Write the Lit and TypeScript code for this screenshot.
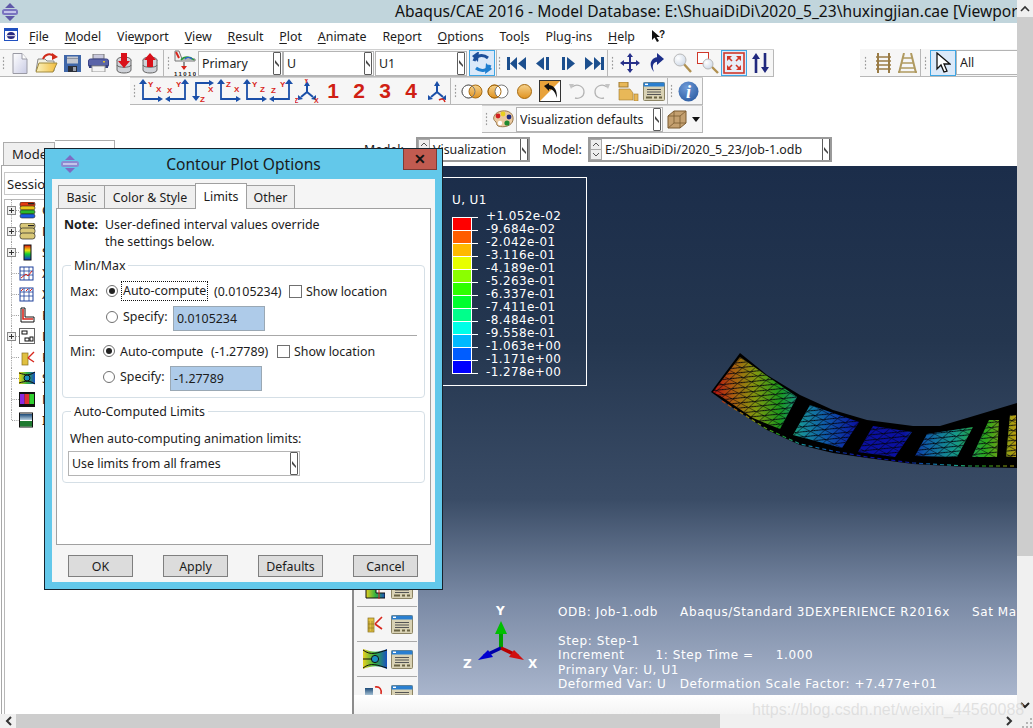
import { LitElement, html, css, svg } from "lit";
import { customElement } from "lit/decorators.js";

const ic = (w: number, h: number, body: unknown) =>
  html`<svg width=${w} height=${h} viewBox="0 0 ${w} ${h}">${body}</svg>`;

const BL = "#1a4fa8";
const RD = "#d8261c";
const axis = (kind: number, a: string, b: string) => {
  const s = (d: string) => svg`<path d=${d} fill="none" stroke=${BL} stroke-width="1.8"/>`;
  const h = (d: string) => svg`<path d=${d} fill=${BL}/>`;
  const t = (x: number, y: number, c: string) =>
    svg`<text x=${x} y=${y} font-family="Liberation Sans" font-weight="700" font-size="8" fill=${RD}>${c}</text>`;
  if (kind === 0)
    return ic(24, 24, svg`${s("M4 3V20H22")}${h("M0 5L4 0L8 5Z")}${h("M19 17L24 20L19 23Z")}${t(9, 8, a)}${t(17, 13, b)}`);
  if (kind === 1)
    return ic(24, 24, svg`${s("M20 3V20H3")}${h("M16 5L20 0L24 5Z")}${h("M5 17L0 20L5 23Z")}${t(11, 8, a)}${t(2, 14, b)}`);
  return ic(24, 24, svg`${s("M5 20V4H21")}${h("M1 17L5 22L9 17Z")}${h("M18 1L23 4L18 7Z")}${t(17, 13, a)}${t(9, 23, b)}`);
};
const triad = (lab: boolean) =>
  ic(24, 24, svg`<path d="M12 6V13M12 13L6 18M12 13L18 18" stroke=${BL} stroke-width="2" fill="none"/><path d="M9 7L12 2L15 7ZM3 16L8 20L3 21ZM21 16L16 20L21 21Z" fill=${BL}/>
  ${lab
      ? svg`<text x="9" y="4" font-size="7" font-weight="700" font-family="Liberation Sans" fill=${RD}>Y</text><text x="-1" y="24" font-size="7" font-weight="700" font-family="Liberation Sans" fill=${RD}>Z</text><text x="19" y="24" font-size="7" font-weight="700" font-family="Liberation Sans" fill=${RD}>X</text>`
      : svg`<path d="M14 21C17 19 19 20 20 23" stroke=${RD} stroke-width="1.6" fill="none"/>`}`);

const cyl = (up: boolean) =>
  ic(18, 22, svg`<ellipse cx="9" cy="8" rx="7" ry="3" fill="#d9dbe0" stroke="#666"/><path d="M2 8V18C2 22 16 22 16 18V8" fill="#cfd2d8" stroke="#666"/><path d="M2 13C2 16 16 16 16 13" fill="none" stroke="#666"/>
  <path d=${up ? "M9 1L15 8H12V15H6V8H3Z" : "M6 1H12V9H15L9 16L3 9H6Z"} fill="#d9101a"/>`);

const tableIcon = ic(22, 19, svg`<rect x=".5" y=".5" width="21" height="18" rx="1" fill="#d9d2b4" stroke="#8c8464"/><rect x=".5" y=".5" width="21" height="4" fill="#2a7fd0"/><rect x="2" y="1.6" width="3" height="1.4" fill="#fff"/><path d="M4 7.5H18M4 10H18M4 12.5H18" stroke="#555" stroke-width="1"/><path d="M3 15.5H9M11 15.5H14M16 15.5H19" stroke="#6b6444" stroke-width="2"/>`);

const ICONS: Record<string, unknown> = {
  doc: ic(16, 21, svg`<path d="M1 .5H10L15 6V20.5H1Z" fill="url(#gDoc)" stroke="#9a9aa4"/><path d="M10 .5V6H15" fill="#fff" stroke="#9a9aa4"/>`),
  open: ic(23, 20, svg`<path d="M3 6H10L12 8H19V18H1Z" fill="#f2f0e0" stroke="#888"/><path d="M4 10H22L18 19H1Z" fill="url(#gFolder)" stroke="#a08a40"/><path d="M8 6C10 1 15 0 19 3" fill="none" stroke="#d02a1a" stroke-width="2"/><path d="M17 0L23 4L17 7Z" fill="#d02a1a"/>`),
  save: ic(17, 17, svg`<rect width="17" height="17" fill="#3f66a8"/><rect x="3" y="1.5" width="11" height="7" fill="#c3c7cf"/><rect x="3" y="3" width="11" height="1" fill="#8d93a0"/><rect x="4" y="11" width="9" height="6" fill="#2b2f38"/><rect x="9" y="12" width="3" height="4" fill="#9aa0ac"/>`),
  print: ic(21, 18, svg`<rect x="5" y="0" width="11" height="5" fill="#c8c8dc" stroke="#777"/><rect x="0.5" y="5" width="20" height="8" rx="2" fill="#5a64a8" stroke="#3a4288"/><rect x="1" y="11" width="19" height="3" fill="#34407e"/><rect x="4" y="12" width="13" height="6" fill="#f4f4f4" stroke="#999"/><rect x="15" y="7" width="2" height="1.5" fill="#e0c030"/>`),
  down: cyl(false),
  up: cyl(true),
  part: ic(22, 26, svg`<path d="M1 1V11H21V9H8L5 1Z" fill="#eee" stroke="#777"/><path d="M2 2L5 8" stroke=${RD} stroke-width="2"/><path d="M7 10C10 6 16 6 20 10" stroke="#2a9a3a" stroke-width="1.5" fill="none"/><path d="M11 9C13 7 16 7 18 9" stroke="#2a60d0" stroke-width="1.5" fill="none"/><path d="M10 12V19" stroke="#333"/><path d="M7 16L10 20L13 16Z" fill=${RD}/><text x="0" y="26" font-size="6" font-family="Liberation Sans" font-weight="700" fill="#222" textLength="22">11010</text>`),
  sync: ic(22, 22, svg`<path d="M3 9C5 3 12 2 17 6" fill="none" stroke="#1d4f9a" stroke-width="3"/><path d="M8 0L1 5L7 11Z" fill="#1d4f9a" transform="translate(0 -1)"/><path d="M19 13C17 19 10 20 5 16" fill="none" stroke="#1f7fd0" stroke-width="3"/><path d="M14 22L21 17L15 11Z" fill="#1f7fd0"/>`),
  first: ic(19, 13, svg`<path d="M0 0H3V13H0ZM10 0V13L3 6.5ZM19 0V13L11 6.5Z" fill="#1c4f8e"/>`),
  prev: ic(13, 13, svg`<path d="M8 0V13L0 6.5ZM10 0H13V13H10Z" fill="#1c4f8e"/>`),
  next: ic(13, 13, svg`<path d="M5 0V13L13 6.5ZM0 0H3V13H0Z" fill="#1c4f8e"/>`),
  last: ic(19, 13, svg`<path d="M19 0H16V13H19ZM9 0V13L16 6.5ZM0 0V13L8 6.5Z" fill="#1c4f8e"/>`),
  pan: ic(20, 20, svg`<path d="M10 2V18M2 10H18" stroke="#27308a" stroke-width="2"/><path d="M10 0L13 4H7ZM10 20L13 16H7ZM0 10L4 7V13ZM20 10L16 7V13Z" fill="#27308a"/>`),
  rotate: ic(16, 20, svg`<path d="M12 4C4 3 -1 11 6 19C3 12 6 8 12 9Z" fill="#1d2f8a"/><path d="M9 0L16 6L9 12Z" fill="#1d2f8a"/>`),
  zoom: ic(19, 20, svg`<path d="M10 10L18 19" stroke="#b09050" stroke-width="2.4"/><circle cx="7" cy="7" r="6" fill="url(#gLens)" stroke="#b8b8b8"/>`),
  boxzoom: ic(22, 22, svg`<rect x=".5" y=".5" width="11" height="11" fill="#fff" stroke="#d0382a"/><path d="M14 14L21 21" stroke="#b09050" stroke-width="2.4"/><circle cx="11" cy="12" r="5" fill="url(#gLens)" stroke="#b8b8b8"/>`),
  fit: ic(22, 22, svg`<rect x="1" y="1" width="20" height="20" fill="#e8eef8" stroke="#d0382a" stroke-width="1.6"/><path d="M4 4L9 4L4 9ZM18 4L13 4L18 9ZM4 18L9 18L4 13ZM18 18L13 18L18 13Z" fill="#d0382a"/><path d="M5 5L9 9M17 5L13 9M5 17L9 13M17 17L13 13" stroke="#d0382a" stroke-width="1.6"/>`),
  flip: ic(17, 20, svg`<path d="M4 4V20M13 0V16" stroke="#20287e" stroke-width="2.6"/><path d="M4 0L8 6H0ZM13 20L17 14H9Z" fill="#20287e"/>`),
  rail: ic(15, 20, svg`<path d="M2 0V20M13 0V20" stroke="#9a7c46" stroke-width="2"/><path d="M0 4H15M0 8H15M0 12H15M0 16H15" stroke="#9a7c46" stroke-width="1.6"/>`),
  rail2: ic(19, 20, svg`<path d="M6 0L1 20M13 0L18 20" stroke="#b09a60" stroke-width="2"/><path d="M4 5H15M3 10H16M2 15H17M0 19H19" stroke="#b09a60" stroke-width="1.6"/>`),
  cursor: ic(15, 21, svg`<path d="M1 1V17L5 13L8 20L11 19L8 12H14Z" fill="#fff" stroke="#111" stroke-width="1.3"/>`),
  venn1: ic(22, 15, svg`<circle cx="7.5" cy="7.5" r="6.5" fill="#fff" stroke="#777"/><circle cx="14.5" cy="7.5" r="6.5" fill="url(#gOr)" stroke="#a66a10"/><circle cx="7.5" cy="7.5" r="6.5" fill="none" stroke="#777"/>`),
  venn2: ic(22, 15, svg`<circle cx="7.5" cy="7.5" r="6.5" fill="url(#gOr)" stroke="#a66a10"/><circle cx="14.5" cy="7.5" r="6.5" fill="#fff" stroke="#777"/><circle cx="7.5" cy="7.5" r="6.5" fill="none" stroke="#a66a10"/>`),
  ball: ic(15, 15, svg`<circle cx="7.5" cy="7.5" r="7" fill="url(#gOr)" stroke="#a66a10"/>`),
  tool: ic(22, 22, svg`<rect x=".5" y=".5" width="21" height="21" fill="#fff" stroke="#333"/><path d="M1 1H21L1 21Z" fill="#e8a23a"/><path d="M5 6L10 3V5C16 6 18 10 18 18C16 12 14 9 10 9V11Z" fill="#111"/>`),
  undo: ic(17, 17, svg`<path d="M4 4C9 0 16 3 16 9C16 14 11 16 7 15" fill="none" stroke="#b4b4b4" stroke-width="1.3"/><path d="M1 1L6 1L3 6Z" fill="#c4c4c4"/>`),
  redo: ic(17, 17, svg`<path d="M13 4C8 0 1 3 1 9C1 14 6 16 10 15" fill="none" stroke="#b4b4b4" stroke-width="1.3"/><path d="M16 1L11 1L14 6Z" fill="#c4c4c4"/>`),
  layers: ic(21, 19, svg`<rect x="1" y="0" width="9" height="5" fill="#e8b858" stroke="#a07a30"/><path d="M1 7H12L15 11V18H1Z" fill="#e8b858" stroke="#a07a30" stroke-width=".6"/><rect x="16" y="12" width="4" height="7" fill="#e8b858" stroke="#a07a30" stroke-width=".6"/>`),
  table: tableIcon,
  info: ic(21, 21, svg`<circle cx="10.5" cy="10.5" r="10" fill="url(#gInfo)"/><text x="10.5" y="17" text-anchor="middle" font-family="Liberation Serif" font-style="italic" font-weight="700" font-size="18" fill="#fff">i</text>`),
  palette: ic(22, 18, svg`<path d="M10 1C17 0 22 4 21 10C20 16 12 18 6 16C4 15 5 12 3 11C0 9 2 2 10 1Z" fill="#eac9a0" stroke="#9a7a50"/><circle cx="6" cy="6" r="2.4" fill="#d02020"/><circle cx="11" cy="4" r="2.4" fill="#e8d020"/><circle cx="17" cy="7" r="2.4" fill="#1a2a80"/><circle cx="15" cy="13" r="2.6" fill="#208a30"/><circle cx="8" cy="13" r="2.2" fill="#fff"/>`),
  cube: ic(20, 19, svg`<path d="M1 6L7 1H19V13L13 18H1Z" fill="#c4a070" stroke="#7a5a30"/><path d="M1 6H13V18M13 6L19 1M7 1V13H19M7 13L1 18" fill="none" stroke="#7a5a30" stroke-width=".8"/>`),
  drop: ic(8, 5, svg`<path d="M0 0H8L4 5Z" fill="#111"/>`),
};

const TREE: Record<string, unknown> = {
  stack: ic(17, 17, svg`<rect x="1" y="0" width="15" height="5" rx="2" fill="#e23a10" stroke="#222" stroke-width=".6"/><rect x="9" y="1" width="6" height="1.4" fill="#222"/><rect x="1" y="4" width="15" height="4" rx="2" fill="#eac81a" stroke="#222" stroke-width=".6"/><rect x="1" y="8" width="15" height="4" rx="2" fill="#2ab82a" stroke="#222" stroke-width=".6"/><rect x="1" y="12" width="15" height="4" rx="2" fill="#1a5ae0" stroke="#222" stroke-width=".6"/>`),
  tan: ic(17, 17, svg`<rect x="1" y="0" width="15" height="6" rx="2.5" fill="#d9c878" stroke="#222" stroke-width=".7"/><rect x="9" y="2" width="6" height="1.2" fill="#222"/><rect x="1" y="5" width="15" height="6" rx="2.5" fill="#d9c878" stroke="#222" stroke-width=".7"/><rect x="1" y="10" width="15" height="6" rx="2.5" fill="#d9c878" stroke="#222" stroke-width=".7"/>`),
  spec: ic(17, 17, svg`<rect x="5" y="1" width="7" height="15" fill="url(#gSpec)" stroke="#111"/>`),
  xy1: ic(17, 17, svg`<rect x="1" y="2" width="13" height="13" fill="#fff" stroke="#1c3f9a"/><path d="M5 2V15M10 2V15M1 6H14M1 10H14" stroke="#1c3f9a" stroke-width=".8"/><path d="M2 13L7 9L9 11L13 6" stroke=${RD} fill="none"/>`),
  xy2: ic(17, 17, svg`<rect x="1" y="2" width="13" height="13" fill="#fff" stroke="#1c3f9a"/><path d="M5 2V15M10 2V15M1 6H14M1 10H14" stroke="#1c3f9a" stroke-width=".8"/><path d="M2 5L4 3M7 5L9 3M11 5L13 3" stroke=${RD}/>`),
  path: ic(17, 17, svg`<path d="M2 1H6V10H15V15H2Z" fill="#fff" stroke="#111"/><path d="M4 2V12H14" fill="none" stroke=${RD} stroke-width="1.6"/>`),
  disp: ic(17, 17, svg`<rect x=".5" y=".5" width="15" height="15" fill="#fff" stroke="#666"/><rect x="3" y="3" width="5" height="3" fill="none" stroke="#111"/><rect x="6" y="10" width="4" height="3" fill="none" stroke="#111"/><rect x="11" y="9" width="3" height="4" fill="none" stroke="#111"/>`),
  cut: ic(17, 17, svg`<rect x="3" y="4" width="6" height="12" fill="#e0c040" stroke="#887020" stroke-width=".7"/><path d="M9 9L15 3M9 9L15 13" stroke=${RD} stroke-width="1.4"/>`),
  flow: ic(17, 17, svg`<rect x="0" y="2" width="16" height="12" fill="url(#gFlow)"/><path d="M0 3C7 5 10 6 16 2M0 13C7 11 10 10 16 14" stroke="#111" fill="none"/><circle cx="8" cy="8" r="3" fill="#1a90c0" stroke="#111"/>`),
  film: ic(17, 17, svg`<rect x="0" y="1" width="16" height="15" fill="#111"/><rect x="1" y="3" width="4.6" height="10" fill="#8a2ae0"/><rect x="5.6" y="3" width="4.8" height="10" fill="#e03030"/><rect x="10.4" y="3" width="4.6" height="10" fill="#30d030"/>`),
  img: ic(17, 17, svg`<rect x=".5" y="1" width="13" height="14" fill="#fff" stroke="#111"/><rect x="1" y="2" width="12" height="6" fill="url(#gImg)"/><rect x="1" y="9" width="12" height="5.5" fill="#1f7a30"/>`),
};

const treeRows: [string, boolean, string][] = [
  ["stack", true, "Output Databases"],
  ["tan", true, "Model Databases"],
  ["spec", true, "Spectrums"],
  ["xy1", false, "XY Plots"],
  ["xy2", false, "XY Data"],
  ["path", false, "Paths"],
  ["disp", true, "Display Groups"],
  ["cut", false, "Free Body Cuts"],
  ["flow", false, "Streams"],
  ["film", false, "Movies"],
  ["img", false, "Images"],
];

const legendLabels = ["+1.052e-02","-9.684e-02","-2.042e-01","-3.116e-01","-4.189e-01","-5.263e-01","-6.337e-01","-7.411e-01","-8.484e-01","-9.558e-01","-1.063e+00","-1.171e+00","-1.278e+00"];
const legendColors = ["#ff0000","#ff5d00","#ffb900","#e8ff00","#8bff00","#2eff00","#00ff2e","#00ff8b","#00ffe8","#00b9ff","#005dff","#0000ff"];

const menu: [string, string, string][] = [
  ["", "F", "ile"], ["", "M", "odel"], ["Vie", "w", "port"], ["", "V", "iew"], ["", "R", "esult"], ["", "P", "lot"],
  ["", "A", "nimate"], ["Re", "p", "ort"], ["", "O", "ptions"], ["Too", "l", "s"], ["Plu", "g", "-ins"], ["", "H", "elp"],
];

const meshPanels = [
  "713,392 740,357 797,397 780,429 753,418 722,397",
  "810,405 859,422 842,448 793,435",
  "873,426 912,432 895,457 858,452",
  "927,434 973,427 957,457 915,456",
  "989,420 999,420 997,457 972,457",
  "1010,415 1016,415 1016,457 1006,457",
];

@customElement("app-root")
export class AppRoot extends LitElement {
  static styles = css`
    :host { display: block; width: 1033px; height: 728px; overflow: hidden; position: relative; background: #fff;
      font-family: "Noto Sans", sans-serif; font-size: 12.4px; color: #1c1c1c; }
    .defs { position: absolute; width: 0; height: 0; }
    svg { display: block; flex: none; }
    .frame { display: grid; grid-template-columns: 1017px 16px; grid-template-rows: 714px 14px; height: 728px; }
    .work { display: flex; flex-direction: column; height: 714px; overflow: hidden; }

    .title { height: 23px; flex: none; background: #c1d5dc; position: relative; font-size: 15.6px; line-height: 23px; white-space: nowrap; overflow: hidden; padding-left: 395px; color: #111; }
    .title svg { position: absolute; left: 2px; top: 3px; }
    .menubar { height: 26px; flex: none; display: flex; align-items: center; gap: 15.8px; padding-left: 29px; position: relative; background: #fff; white-space: nowrap; }
    .menubar .logo { position: absolute; left: 4px; top: 5px; }
    .menubar u { text-underline-offset: 2px; }

    .tbrow { display: flex; flex: none; height: 28px; }
    .r2 { padding-left: 130px; }
    .r3 { padding-left: 482px; }
    .strip { display: flex; align-items: center; background: #f6f6f6; border-bottom: 1px solid #b8b8b8; box-sizing: border-box; height: 28px; border-top: 1px solid #d0d0d0; }
    .grp { display: flex; align-items: center; height: 100%; border-right: 1px solid #b8b8b8; box-sizing: content-box; }
    .grip { flex: none; width: 3px; height: 14px; margin: 0 2px 0 2px; background-image: radial-gradient(circle, #9a9a9a 1px, transparent 1.1px); background-size: 3px 3.5px; }
    .grip.g6 { margin: 0 2px 0 1px; }
    .grip.g8 { margin: 0 2px 0 3px; }
    .grip.g9 { margin: 0 3px 0 3px; }
    .grip.g11 { margin: 0 4px 0 4px; }
    .pad1 { width: 1px; flex: none; }
    .btn { width: 26px; height: 26px; flex: none; display: flex; align-items: center; justify-content: center; box-sizing: border-box; }
    .btn.n { font-family: "Liberation Sans", sans-serif; font-weight: 700; font-size: 21px; color: #d01f14; }
    .btn.on { background: #dbe9f9; border: 1px solid #3fa6e4; }
    .btn.sq { width: 24px; }
    .btn.dr { width: 13px; }
    .right { display: flex; height: 28px; margin-left: 86px; flex: 1; min-width: 0; }
    .right .strip { flex: 1; border-top: 0; min-width: 0; overflow: hidden; }
    .grp.fill { flex: 1; border-right: 0; min-width: 0; overflow: hidden; }

    .combo { display: flex; align-items: center; box-sizing: border-box; height: 25px; background: #fff; border: 1px solid #b4b4b4; padding: 0 1px 0 3px; flex: none; white-space: nowrap; overflow: hidden; }
    .combo .txt { flex: 1; overflow: hidden; }
    .spin { flex: none; width: 6px; height: 21px; border: 1px solid #5c5c5c; border-radius: 1px; background: #fff; box-sizing: content-box; display: flex; align-items: center; justify-content: center; }
    .w85 { width: 85px; } .w91 { width: 91px; } .w92 { width: 92px; margin: 0 2px 0 1px; }
    .w147 { width: 147px; margin: 0 2px 0 0; }
    .wAll { width: 90px; border-right: 0; }

    .lower { flex: 1; display: flex; min-height: 0; }
    .lp { width: 352px; flex: none; display: flex; flex-direction: column; }
    .tabs0 { height: 32px; flex: none; display: flex; align-items: flex-end; padding-left: 3px; box-sizing: border-box; }
    .t0 { width: 52px; height: 23px; box-sizing: border-box; background: #efefef; border: 1px solid #acacac; border-bottom: 0; padding: 2px 0 0 8px; overflow: hidden; font-size: 13px; }
    .t1 { width: 60px; height: 25px; box-sizing: border-box; background: #fff; border: 1px solid #acacac; border-bottom: 0; border-left: 0; }
    .panel { flex: 1; margin-left: 1px; border-left: 1px solid #a8a8a8; border-top: 1px solid #a8a8a8; display: flex; flex-direction: column; padding: 6px 0 0 2px; min-height: 0; }
    .sess { width: 300px; height: 23px; border-color: #c8c8c8; padding-left: 2px; flex: none; font-size: 13px; }
    .tree { margin-top: 4px; flex: 1; border: 1px solid #b8b8b8; border-right: 0; border-bottom: 0; min-height: 0; }
    .trow { display: flex; align-items: center; height: 21px; white-space: nowrap; }
    .trow .ti { margin: 0 6px 0 0; }

    .rc { flex: 1; display: flex; flex-direction: column; min-width: 0; }
    .modelrow { height: 33px; flex: none; display: flex; align-items: center; box-sizing: border-box; padding: 0 0 0 12px; white-space: nowrap; background: #fff; }
    .ml1 { width: 52px; flex: none; }
    .ml2 { width: 46px; margin-left: 12px; flex: none; }
    .mcombo { display: flex; align-items: center; box-sizing: border-box; height: 25px; border: 2px solid #9a9a9a; background: #fff; flex: none; overflow: hidden; }
    .mcombo .txt { flex: 1; padding-left: 3px; overflow: hidden; white-space: nowrap; }
    .mw1 { width: 114px; } .mw2 { width: 244px; }
    .vp { flex: 1; display: flex; flex-direction: column; min-height: 0; border-left: 2px solid #8c8c8c; }
    .vpmain { flex: 1; display: flex; min-height: 0; }
    .status { height: 19px; flex: none; background: linear-gradient(#fff, #f4f4f4); }
    .vstrip { width: 64px; flex: none; background: #f5f5f5; padding-top: 406px; box-sizing: border-box; overflow: hidden; }
    .vrow { height: 35px; box-sizing: border-box; border-bottom: 1px solid #aaa; display: flex; align-items: center; padding-left: 8px; gap: 6px; margin: 0 1px 0 3px; flex: none; }
    .vic { width: 20px; display: flex; justify-content: center; flex: none; }
    .canvas { flex: 1; position: relative; overflow: hidden; background: linear-gradient(#1b2d4a 0%, #24364f 33%, #3a4c66 63%, #7a8aa5 82%, #a9b5cc 100%);
      font-family: "DejaVu Sans", sans-serif; font-size: 12px; letter-spacing: .38px; color: #fff; }
    .canvas > svg { position: absolute; left: 0; top: 0; }
    .leg { position: absolute; left: 24px; top: 11px; width: 145px; height: 209px; box-sizing: border-box; border: 1px solid #fff; border-left: 0; padding: 15px 0 0 10px; }
    .legt { height: 14px; line-height: 14px; }
    .legb { display: flex; margin-top: 3px; }
    .bar { margin-top: 7px; width: 20px; height: 157px; flex: none; box-sizing: border-box; border: 1px solid #fff; border-bottom: 0; }
    .cell { height: 13px; box-sizing: border-box; border-bottom: 1px solid #fff; }
    .ticks { margin-top: 7px; width: 6px; height: 157px; flex: none; background: repeating-linear-gradient(#fff 0 1px, transparent 1px 13px); }
    .labs { margin-left: 8px; line-height: 13px; }
    .info { position: absolute; left: 140px; top: 439px; line-height: 14.4px; white-space: pre; letter-spacing: .6px; }

    .vbar { background: #f0f0f0; display: flex; flex-direction: column; }
    .vbtn { height: 17px; display: flex; align-items: center; justify-content: center; flex: none; }
    .vthumb { height: 539px; background: #cdcdcd; flex: none; }
    .vrest { flex: 1; }
    .hbar { background: #f0f0f0; display: flex; }
    .hbtn { width: 16px; display: flex; align-items: center; justify-content: center; flex: none; background: #f0f0f0; }
    .hthumb { width: 704px; background: #cdcdcd; flex: none; }
    .hrest { flex: 1; }
    .corner { background: #f0f0f0; display: flex; align-items: flex-end; justify-content: flex-end; }

    .dialog { position: absolute; left: 44px; top: 148px; width: 399px; height: 442px; box-sizing: border-box; border: 1px solid #16222c; background: #63c8ea; display: flex; flex-direction: column; padding: 0 7px 7px 7px; }
    .dhead { height: 30px; flex: none; display: flex; align-items: center; justify-content: center; font-size: 15.6px; color: #1a1a1a; position: relative; }
    .dhead .dlogo { position: absolute; left: 9px; top: 6px; }
    .dhead .close { position: absolute; right: -2px; top: 0; width: 34px; height: 21px; background: #c15b50; border: 1px solid #7d3a34; border-top: 0; box-sizing: border-box; display: flex; align-items: center; justify-content: center; font-family: "Liberation Sans", sans-serif; font-weight: 700; font-size: 14px; color: #111; }
    .dbody { flex: 1; background: #f5f5f5; display: flex; flex-direction: column; padding: 4px 4px 5px; min-height: 0; }
    .dtabs { height: 25px; flex: none; display: flex; align-items: flex-end; padding-left: 2px; }
    .dtab { height: 23px; box-sizing: border-box; border: 1px solid #a0a0a0; border-bottom: 0; background: #efefef; display: flex; align-items: center; justify-content: center; margin-right: -1px; }
    .dtab.active { height: 26px; background: #fff; margin-bottom: -1px; position: relative; z-index: 1; }
    .tB { width: 47px; } .tC { width: 92px; } .tL { width: 52px; } .tO { width: 49px; }
    .tbody { flex: 1; background: #fff; border: 1px solid #a0a0a0; box-sizing: border-box; padding: 7px 5px 0; min-height: 0; }
    .note { display: grid; grid-template-columns: 41px 1fr; margin-left: 2px; line-height: 17px; }
    .note b { font-weight: 700; }
    fieldset { margin: 0; padding: 0 7px 6px; border: 1px solid #d5dfe6; border-radius: 4px; width: 363px; box-sizing: border-box; min-width: 0; }
    legend { margin-left: 1px; padding: 0 3px; line-height: 17px; }
    .fs1 { margin-top: 7px; }
    .fs2 { margin-top: 5px; }
    .mm { display: flex; flex-direction: column; }
    .rowa { display: flex; align-items: center; height: 20px; white-space: nowrap; }
    .rowb { display: flex; align-items: center; height: 25px; margin-top: 5px; white-space: nowrap; }
    .fs1 .mx { padding-top: 7px; }
    .lab { flex: none; }
    .mx .lab { width: 36px; }
    .mn .lab { width: 33px; }
    .radio { width: 12px; height: 12px; box-sizing: border-box; border: 1px solid #707070; border-radius: 50%; background: #fff; flex: none; margin-right: 5px; display: flex; align-items: center; justify-content: center; }
    .radio.sel::after { content: ""; width: 6px; height: 6px; border-radius: 50%; background: #222; }
    .auto { flex: none; width: 83px; }
    .focus { outline: 1px dotted #111; margin-left: -1px; padding-left: 1px; width: 84px; line-height: 18px; flex: none; box-sizing: content-box; }
    .val { flex: none; margin-left: 7px; width: 67px; }
    .mn .val { margin-left: 8px; width: 58px; }
    .check { width: 13px; height: 13px; box-sizing: border-box; border: 1px solid #707070; background: #fff; flex: none; margin: 0 4px 0 8px; }
    .upb { margin-bottom: 4px; }
    .spec { width: 44px; flex: none; }
    .inp { width: 92px; height: 25px; box-sizing: border-box; background: #aecbe9; border: 1px solid #9aa8b4; display: flex; align-items: center; padding-left: 3px; margin-left: 6px; flex: none; }
    .hr { height: 1px; background: #a8a8a8; margin: 4px 0 5px -1px; width: 348px; }
    .when { margin-top: 10px; line-height: 17px; }
    .cb2 { width: 232px; margin: 4px 0 0 -2px; }
    .dbtns { height: 22px; flex: none; margin-top: 10px; display: flex; gap: 30px; padding-left: 12px; }
    .dbtn { width: 65px; height: 22px; box-sizing: border-box; background: #dcdcdc; border: 1px solid #7f7f7f; display: flex; align-items: center; justify-content: center; }

    .wm { position: absolute; left: 752px; top: 701px; font-family: "Liberation Sans", sans-serif; font-size: 16px; color: rgba(215,215,215,.72); white-space: nowrap; pointer-events: none; }
  `;

  private b(name: string, cls = "") {
    return html`<div class="btn ${cls}">${ICONS[name]}</div>`;
  }
  private spinner() {
    return html`<span class="spin">${ic(6, 10, svg`<path d="M1 2L5 7V9L1 5Z" fill="#444"/>`)}</span>`;
  }
  private combo(text: string, cls: string) {
    return html`<div class="combo ${cls}"><span class="txt">${text}</span>${this.spinner()}</div>`;
  }
  private modelCombo(text: string, cls: string) {
    return html`<div class="mcombo ${cls}">
      ${ic(12, 21, svg`<rect x=".5" y=".5" width="11" height="10" fill="#eee" stroke="#aaa"/><rect x=".5" y="10.5" width="11" height="10" fill="#eee" stroke="#aaa"/><path d="M3 7L6 4L9 7M3 14L6 17L9 14" fill="none" stroke="#555"/>`)}
      <span class="txt">${text}</span>${this.spinner()}
    </div>`;
  }

  render() {
    const dlogo = ic(18, 18, svg`<path d="M9 0L14 5H4ZM9 18L14 13H4Z" fill="#7c6cc4"/><rect x="0" y="6" width="18" height="6" rx="2.5" fill="#8d8ad0"/><rect x="2" y="8" width="14" height="2" fill="#c4c4ea"/>`);
    return html`
      <svg class="defs" aria-hidden="true"><defs>
        <linearGradient id="gDoc" x1="0" y1="0" x2="1" y2="1"><stop offset="0" stop-color="#fff"/><stop offset="1" stop-color="#c9cbe4"/></linearGradient>
        <linearGradient id="gFolder" x1="0" y1="0" x2="1" y2="0"><stop offset="0" stop-color="#fbf3c0"/><stop offset="1" stop-color="#f2bc3c"/></linearGradient>
        <radialGradient id="gLens" cx=".35" cy=".35" r=".8"><stop offset="0" stop-color="#fff"/><stop offset="1" stop-color="#c8d4e4"/></radialGradient>
        <linearGradient id="gOr" x1="0" y1="0" x2="0" y2="1"><stop offset="0" stop-color="#f5d28c"/><stop offset="1" stop-color="#e09220"/></linearGradient>
        <radialGradient id="gInfo" cx=".4" cy=".3" r=".8"><stop offset="0" stop-color="#6f9bd8"/><stop offset="1" stop-color="#2a5aa0"/></radialGradient>
        <linearGradient id="gSpec" x1="0" y1="0" x2="0" y2="1"><stop offset="0" stop-color="#e01010"/><stop offset=".35" stop-color="#f0e010"/><stop offset=".6" stop-color="#10d030"/><stop offset="1" stop-color="#1030e0"/></linearGradient>
        <linearGradient id="gFlow" x1="0" y1="0" x2="1" y2="0"><stop offset="0" stop-color="#e8d020"/><stop offset=".5" stop-color="#30b040"/><stop offset="1" stop-color="#1a50c0"/></linearGradient>
        <linearGradient id="gImg" x1="0" y1="0" x2="0" y2="1"><stop offset="0" stop-color="#1c4a78"/><stop offset="1" stop-color="#b8d0e0"/></linearGradient>
      </defs></svg>
      <div class="frame">
        <div class="work">
          <div class="title">${ic(18, 18, svg`<path d="M8 0L13 5H3ZM8 18L13 13H3Z" fill="#5f58a8"/><rect x="0" y="6" width="16" height="6" rx="2.5" fill="#7a74c0"/><rect x="2" y="8" width="12" height="2" fill="#c4c4ea"/>`)}Abaqus/CAE 2016 - Model Database: E:\\ShuaiDiDi\\2020_5_23\\huxingjian.cae [Viewport: 1]</div>
          <div class="menubar">
            <span class="logo">${ic(14, 13, svg`<rect x=".5" y=".5" width="13" height="12" fill="#fff" stroke="#2050c0"/><rect x=".5" y=".5" width="13" height="2.5" fill="#2050c0"/><ellipse cx="7" cy="7.5" rx="4" ry="3.5" fill="#2a2a80"/><rect x="2" y="7" width="10" height="1.2" fill="#ccd"/>`)}</span>
            ${menu.map(([a, u, c]) => html`<span>${a}<u>${u}</u>${c}</span>`)}
            <span>${ic(14, 14, svg`<path d="M1 1V11L3.5 8.5L6 13L8 12L5.5 8H9Z" fill="#111"/><text x="8" y="9" font-family="Liberation Sans" font-weight="700" font-size="10" fill="#111">?</text>`)}</span>
          </div>
          <div class="tbrow r1">
            <div class="strip">
              <div class="grp"><span class="grip"></span>${["doc","open","save","print","down","up"].map(n => this.b(n))}</div>
              <div class="grp"><span class="grip g8"></span>${this.b("part")}
                ${this.combo("Primary", "w85")}${this.combo("U", "w91")}${this.combo("U1", "w92")}
                ${this.b("sync", "on")}<span class="pad1"></span></div>
              <div class="grp"><span class="grip g6"></span>${["first","prev","next","last"].map(n => this.b(n))}</div>
              <div class="grp"><span class="grip g9"></span>${["pan","rotate","zoom","boxzoom"].map(n => this.b(n))}${this.b("fit", "on")}${this.b("flip")}</div>
            </div>
            <div class="right">
              <div class="strip">
                <div class="grp"><span class="grip g11"></span><div class="btn sq">${ICONS.rail}</div><div class="btn sq">${ICONS.rail2}</div><span class="pad1"></span></div>
                <div class="grp fill"><span class="grip g9"></span>${this.b("cursor", "on")}${this.combo("All", "wAll")}</div>
              </div>
            </div>
          </div>
          <div class="tbrow r2">
            <div class="strip">
              <div class="grp"><span class="grip g8"></span>
                ${[axis(0,"Y","X"),axis(1,"Y","X"),axis(2,"X","Z"),axis(0,"Z","X"),axis(0,"Y","Z"),axis(1,"Y","Z"),triad(true)].map(i => html`<div class="btn">${i}</div>`)}
                ${["1","2","3","4"].map(n => html`<div class="btn n">${n}</div>`)}
                <div class="btn">${triad(false)}</div>
              </div>
              <div class="grp"><span class="grip g8"></span>${["venn1","venn2","ball","tool","undo","redo","layers","table"].map(n => this.b(n))}</div>
              <div class="grp"><span class="grip"></span>${this.b("info")}<span class="pad1"></span></div>
            </div>
          </div>
          <div class="tbrow r3">
            <div class="strip">
              <div class="grp"><span class="grip g8"></span>${this.b("palette")}${this.combo("Visualization defaults", "w147")}
                <div class="btn sq">${ICONS.cube}</div><div class="btn dr">${ICONS.drop}</div></div>
            </div>
          </div>
          <div class="lower">
            <div class="lp">
              <div class="tabs0"><div class="t0">Model</div><div class="t1"></div></div>
              <div class="panel">
                <div class="combo sess"><span class="txt">Session Tree</span></div>
                <div class="tree">
                  ${treeRows.map(([k, exp, t], i) => html`<div class="trow">
                    ${ic(14, 21, svg`<path d=${i === treeRows.length - 1 ? "M6.5 0V10.5H14" : "M6.5 0V21M6.5 10.5H14"} stroke="#999" stroke-dasharray="1 1.2" fill="none"/>
                      ${exp ? svg`<rect x="2.5" y="6.5" width="8" height="8" fill="#f0f0f0" stroke="#888"/><path d="M4 10.5H9M6.5 8V13" stroke="#333"/>` : ""}`)}
                    <span class="ti">${TREE[k]}</span><span>${t}</span></div>`)}
                </div>
              </div>
            </div>
            <div class="rc">
              <div class="modelrow">
                <span class="ml1">Model:</span>${this.modelCombo("Visualization", "mw1")}
                <span class="ml2">Model:</span>${this.modelCombo("E:/ShuaiDiDi/2020_5_23/Job-1.odb", "mw2")}
              </div>
              <div class="vp">
                <div class="vpmain">
                  <div class="vstrip">
                    ${[
                      ic(20, 20, svg`<path d="M1 2H11V14H20V19H1Z" fill="url(#gFlow)" stroke="#111"/><path d="M14 8V20" stroke=${RD}/>`),
                      ic(20, 20, svg`<rect x="3" y="4" width="6" height="14" fill="#e0c040" stroke="#887020" stroke-width=".7"/><path d="M4 7V17M7 7V17M3 10H9M3 14H9" stroke="#887020" stroke-width=".6"/><path d="M10 10L17 3M10 10L17 15" stroke=${RD} stroke-width="1.6"/>`),
                      ic(24, 22, svg`<path d="M0 1C9 4 14 5 24 1V21C14 17 9 18 0 21Z" fill="url(#gFlow)"/><path d="M0 2C8 8 14 5 24 2M0 20C8 14 14 17 24 20M0 11H9" stroke="#111" fill="none"/><circle cx="12" cy="11" r="3.6" fill="#1a90c0" stroke="#111"/>`),
                      ic(20, 20, svg`<rect x="0" y="4" width="8" height="8" fill="url(#gImg)"/><path d="M10 3C15 2 17 6 16 10" stroke=${RD} stroke-width="1.6" fill="none"/><path d="M4 14H18" stroke="#333"/>`),
                    ].map(i => html`<div class="vrow"><span class="vic">${i}</span>${tableIcon}</div>`)}
                  </div>
                  <div class="canvas">
                    <svg width="599" height="529" viewBox="418 166 599 529">
                      <defs>
                        <linearGradient id="gMesh" gradientUnits="userSpaceOnUse" x1="713" y1="0" x2="1016" y2="0">
                          <stop offset="0" stop-color="#b80f0f"/><stop offset=".07" stop-color="#a86010"/><stop offset=".14" stop-color="#829810"/><stop offset=".22" stop-color="#1c981c"/><stop offset=".29" stop-color="#18929a"/><stop offset=".37" stop-color="#0f5aa8"/><stop offset=".48" stop-color="#0a10a0"/><stop offset=".63" stop-color="#0a10a0"/><stop offset=".7" stop-color="#0f5aa8"/><stop offset=".8" stop-color="#169a8a"/><stop offset=".9" stop-color="#2ca81c"/><stop offset="1" stop-color="#b89a10"/>
                        </linearGradient>
                        <pattern id="pMesh" width="9" height="8" patternUnits="userSpaceOnUse" patternTransform="rotate(28) skewX(-20)">
                          <path d="M0 0H9M0 0V8M0 8L9 0" stroke="#03030c" stroke-width="1" fill="none"/>
                        </pattern>
                      </defs>
                      <path d="M740 353L767 375L800 395L833 410L867 420L913 426L940 426L967 418L1017 403V468L967 467L913 464L867 458L833 453L800 445L767 430L733 408L711 392Z" fill="#000"/>
                      ${meshPanels.map(p => svg`<polygon points=${p} fill="url(#gMesh)"/><polygon points=${p} fill="url(#pMesh)"/>`)}
                      <path d="M722 401L733 408L767 429L800 444L833 451L867 457L913 463L967 466L1016 466" fill="none" stroke="url(#gMesh)" stroke-width="1.2" stroke-dasharray="4 3"/>
                      <path d="M501 648V627" stroke="#00a000" stroke-width="4"/><path d="M501 621L507 634H495Z" fill="#00c000"/>
                      <path d="M501 648L484 656" stroke="#0000a8" stroke-width="3.5"/><path d="M478 660L488 650L493 657Z" fill="#0000d0"/>
                      <path d="M501 648L518 656" stroke="#b80000" stroke-width="3.5"/><path d="M524 660L514 650L509 657Z" fill="#d01010"/>
                      <g font-family="DejaVu Sans" font-weight="700" font-size="12" fill="#fff">
                        <text x="496" y="615">Y</text><text x="463" y="668">Z</text><text x="528" y="668">X</text>
                      </g>
                    </svg>
                    <div class="leg">
                      <div class="legt">U, U1</div>
                      <div class="legb">
                        <div class="bar">${legendColors.map(c => html`<div class="cell" style="background:${c}"></div>`)}</div>
                        <div class="ticks"></div>
                        <div class="labs">${legendLabels.map(l => html`<div>${l}</div>`)}</div>
                      </div>
                    </div>
                    <div class="info">ODB: Job-1.odb     Abaqus/Standard 3DEXPERIENCE R2016x     Sat May 23 2020

Step: Step-1
Increment       1: Step Time =     1.000
Primary Var: U, U1
Deformed Var: U   Deformation Scale Factor: +7.477e+01</div>
                  </div>
                </div>
                <div class="status"></div>
              </div>
            </div>
          </div>
        </div>
        <div class="vbar">
          <div class="vbtn">${ic(10, 7, svg`<path d="M1 6L5 2L9 6" fill="none" stroke="#333" stroke-width="1.6"/>`)}</div>
          <div class="vthumb"></div><div class="vrest"></div>
          <div class="vbtn">${ic(10, 7, svg`<path d="M1 1L5 5L9 1" fill="none" stroke="#222" stroke-width="2"/>`)}</div>
        </div>
        <div class="hbar">
          <div class="hbtn">${ic(7, 10, svg`<path d="M6 1L2 5L6 9" fill="none" stroke="#333" stroke-width="2"/>`)}</div>
          <div class="hthumb"></div><div class="hrest"></div>
          <div class="hbtn">${ic(7, 10, svg`<path d="M1 1L5 5L1 9" fill="none" stroke="#333" stroke-width="2"/>`)}</div>
        </div>
        <div class="corner">${ic(12, 11, svg`<path d="M9 1h2v2h-2zM5 5h2v2h-2zM9 5h2v2h-2zM1 9h2v2h-2zM5 9h2v2h-2zM9 9h2v2h-2z" fill="#b4b4b4"/>`)}</div>
      </div>

      <div class="dialog">
        <div class="dhead"><span class="dlogo">${dlogo}</span>Contour Plot Options<span class="close">✕</span></div>
        <div class="dbody">
          <div class="dtabs">
            <div class="dtab tB">Basic</div><div class="dtab tC">Color &amp; Style</div><div class="dtab active tL">Limits</div><div class="dtab tO">Other</div>
          </div>
          <div class="tbody">
            <div class="note"><b>Note:</b><span>User-defined interval values override<br>the settings below.</span></div>
            <fieldset class="fs1">
              <legend>Min/Max</legend>
              <div class="mm mx">
                <div class="rowa"><span class="lab">Max:</span><span class="radio sel"></span><span class="focus">Auto-compute</span><span class="val">(0.0105234)</span><span class="check"></span><span>Show location</span></div>
                <div class="rowb"><span class="lab"></span><span class="radio upb"></span><span class="upb spec">Specify:</span><span class="inp">0.0105234</span></div>
              </div>
              <div class="hr"></div>
              <div class="mm mn">
                <div class="rowa"><span class="lab">Min:</span><span class="radio sel"></span><span class="auto">Auto-compute</span><span class="val">(-1.27789)</span><span class="check"></span><span>Show location</span></div>
                <div class="rowb"><span class="lab"></span><span class="radio upb"></span><span class="upb spec">Specify:</span><span class="inp">-1.27789</span></div>
              </div>
            </fieldset>
            <fieldset class="fs2">
              <legend>Auto-Computed Limits</legend>
              <div class="when">When auto-computing animation limits:</div>
              ${this.combo("Use limits from all frames", "cb2")}
            </fieldset>
          </div>
          <div class="dbtns"><div class="dbtn">OK</div><div class="dbtn">Apply</div><div class="dbtn">Defaults</div><div class="dbtn">Cancel</div></div>
        </div>
      </div>
      <div class="wm">https://blog.csdn.net/weixin_44560088</div>
    `;
  }
}
